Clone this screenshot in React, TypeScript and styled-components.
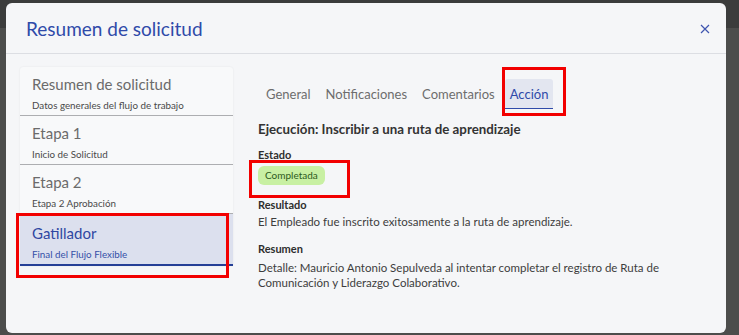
import styled, { createGlobalStyle } from "styled-components";

const GlobalStyle = createGlobalStyle`
  html, body {
    margin: 0;
    padding: 0;
    width: 739px;
    height: 335px;
    overflow: hidden;
  }
  body {
    font-family: "Lato", "Open Sans", sans-serif;
  }
`;

const steps = [
  { title: "Resumen de solicitud", sub: "Datos generales del flujo de trabajo" },
  { title: "Etapa 1", sub: "Inicio de Solicitud" },
  { title: "Etapa 2", sub: "Etapa 2 Aprobación" },
  { title: "Gatillador", sub: "Final del Flujo Flexible", active: true },
];

const tabs = ["General", "Notificaciones", "Comentarios", "Acción"];

const Backdrop = styled.div`
  position: relative;
  width: 739px;
  height: 335px;
  box-sizing: border-box;
  padding: 3px 13px 2px 6px;
  background: linear-gradient(#3b3c3c 0 28px, #4c4d4c 28px);
`;

const Modal = styled.div`
  width: 720px;
  height: 330px;
  background: #f5f6f8;
  border-radius: 6px;
  display: flex;
  flex-direction: column;
  overflow: hidden;
`;

const Header = styled.div`
  height: 50px;
  flex: none;
  display: flex;
  align-items: center;
  justify-content: space-between;
  padding: 0 16px 0 20px;
  border-bottom: 1px solid #dcdee3;
`;

const Title = styled.h2`
  margin: 0;
  font-size: 19px;
  font-weight: 400;
  color: #2f4aa9;
`;

const Close = styled.button`
  border: none;
  background: none;
  padding: 0;
  margin-top: 2px;
  width: 10px;
  height: 10px;
  display: flex;
  cursor: pointer;
`;

const Body = styled.div`
  flex: 1;
  display: flex;
  gap: 25px;
  padding: 13px 14px;
`;

const Sidebar = styled.div`
  width: 213px;
  align-self: flex-start;
  background: #f8f9fa;
  border-radius: 3px 3px 0 0;
  box-shadow: 0 0 2px rgba(0, 0, 0, 0.08);
`;

const Step = styled.div<{ $active?: boolean }>`
  box-sizing: border-box;
  height: ${(p) => (p.$active ? "52px" : "49px")};
  padding: ${(p) => (p.$active ? "9px" : "7px")} 12px 0;
  background: ${(p) => (p.$active ? "#dce0ee" : "transparent")};
  border-bottom: ${(p) => (p.$active ? "2px solid #253f96" : "1px solid #adaeb1")};
`;

const StepTitle = styled.div<{ $active?: boolean }>`
  font-size: 15px;
  line-height: 20px;
  color: ${(p) => (p.$active ? "#2f47a2" : "#6b6b6b")};
`;

const StepSub = styled.div<{ $active?: boolean }>`
  margin-top: 4px;
  font-size: 9.8px;
  line-height: 14px;
  color: ${(p) => (p.$active ? "#3550a8" : "#4a4a4a")};
`;

const Main = styled.div`
  flex: 1;
  padding-top: 12px;
`;

const TabRow = styled.div`
  display: flex;
  gap: 5px;
  margin-left: 3px;
`;

const Tab = styled.div<{ $active?: boolean }>`
  height: 30px;
  box-sizing: border-box;
  padding: 1px 5px 0;
  display: flex;
  align-items: center;
  font-size: 13px;
  color: ${(p) => (p.$active ? "#2f4aa9" : "#6d6d6d")};
  background: ${(p) => (p.$active ? "#e3e6f0" : "transparent")};
  border-radius: 3px 3px 0 0;
  border-bottom: ${(p) => (p.$active ? "1px solid #2f4aa9" : "1px solid transparent")};
`;

const Heading = styled.div`
  margin-top: 12px;
  font-size: 13.3px;
  font-weight: 700;
  color: #333;
`;

const Label = styled.div<{ $gap?: number }>`
  margin-top: ${(p) => p.$gap ?? 10}px;
  font-size: 11px;
  font-weight: 700;
  color: #2e2e2e;
`;

const Text = styled.div<{ $gap?: number }>`
  margin-top: ${(p) => p.$gap ?? 3}px;
  font-size: 11.5px;
  line-height: 15px;
  color: #3d3d3d;
  max-width: 430px;
`;

const Badge = styled.span`
  display: inline-block;
  margin-top: 5px;
  padding: 3px 7px;
  font-size: 10px;
  line-height: 13px;
  color: #2c5a1b;
  background: #c8f0a3;
  border-radius: 6px;
`;

const Marker = styled.div<{ $x: number; $y: number; $w: number; $h: number }>`
  position: absolute;
  left: ${(p) => p.$x}px;
  top: ${(p) => p.$y}px;
  width: ${(p) => p.$w}px;
  height: ${(p) => p.$h}px;
  box-sizing: border-box;
  border: 3px solid #f20000;
  pointer-events: none;
`;

export default function App() {
  return (
    <>
      <GlobalStyle />
      <Backdrop>
        <Modal>
          <Header>
            <Title>Resumen de solicitud</Title>
            <Close aria-label="Cerrar">
              <svg width="10" height="10" viewBox="0 0 10 10">
                <path d="M1 1 L9 9 M9 1 L1 9" stroke="#3f55b0" strokeWidth="1.2" />
              </svg>
            </Close>
          </Header>
          <Body>
            <Sidebar>
              {steps.map((s) => (
                <Step key={s.title} $active={s.active}>
                  <StepTitle $active={s.active}>{s.title}</StepTitle>
                  <StepSub $active={s.active}>{s.sub}</StepSub>
                </Step>
              ))}
            </Sidebar>
            <Main>
              <TabRow>
                {tabs.map((t) => (
                  <Tab key={t} $active={t === "Acción"}>
                    {t}
                  </Tab>
                ))}
              </TabRow>
              <Heading>Ejecución: Inscribir a una ruta de aprendizaje</Heading>
              <Label $gap={11}>Estado</Label>
              <Badge>Completada</Badge>
              <Label $gap={13}>Resultado</Label>
              <Text>El Empleado fue inscrito exitosamente a la ruta de aprendizaje.</Text>
              <Label $gap={13}>Resumen</Label>
              <Text $gap={5}>
                Detalle: Mauricio Antonio Sepulveda al intentar completar el registro de Ruta de
                Comunicación y Liderazgo Colaborativo.
              </Text>
            </Main>
          </Body>
        </Modal>
        <Marker $x={502} $y={67} $w={64} $h={49} />
        <Marker $x={249} $y={160} $w={101} $h={38} />
        <Marker $x={16} $y={213} $w={213} $h={65} />
      </Backdrop>
    </>
  );
}
